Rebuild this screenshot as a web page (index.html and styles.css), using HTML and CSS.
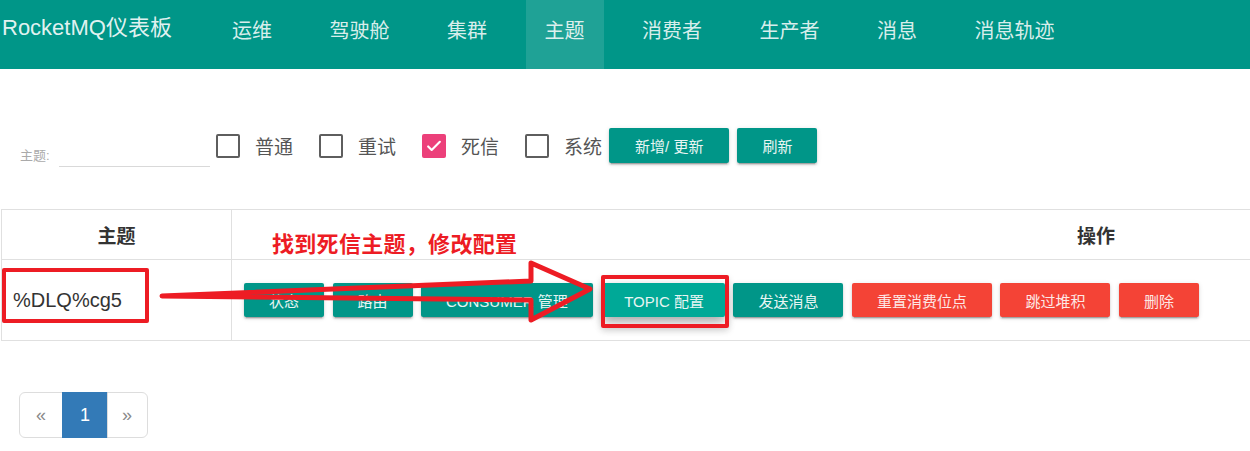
FILE: index.html
```html
<!DOCTYPE html>
<html lang="zh">
<head>
<meta charset="utf-8">
<title>RocketMQ仪表板</title>
<link rel="stylesheet" href="styles.css">
</head>
<body>
<div class="page">
  <nav class="navbar">
    <div class="brand">RocketMQ仪表板</div>
    <ul class="nav">
      <li><a>运维</a></li>
      <li><a>驾驶舱</a></li>
      <li><a>集群</a></li>
      <li class="active"><a>主题</a></li>
      <li><a>消费者</a></li>
      <li><a>生产者</a></li>
      <li><a>消息</a></li>
      <li><a>消息轨迹</a></li>
    </ul>
  </nav>

  <main class="content">
    <div class="filters">
      <label class="field">
        <span class="field-label">主题:</span>
        <span class="field-input"></span>
      </label>
      <label class="check"><span class="box"></span><span class="check-text">普通</span></label>
      <label class="check"><span class="box"></span><span class="check-text">重试</span></label>
      <label class="check"><span class="box checked"><svg viewBox="0 0 24 24" width="20" height="20"><path d="M5 12.5l4.2 4.2L19 7" fill="none" stroke="#fff" stroke-width="2.6" stroke-linecap="round" stroke-linejoin="round"/></svg></span><span class="check-text">死信</span></label>
      <label class="check last"><span class="box"></span><span class="check-text">系统</span></label>
      <button class="btn">新增/ 更新</button>
      <button class="btn">刷新</button>
    </div>

    <div class="table-wrap">
      <table class="topics">
        <thead>
          <tr><th class="col-topic">主题</th><th class="col-ops">操作</th></tr>
        </thead>
        <tbody>
          <tr>
            <td class="topic-name">%DLQ%cg5</td>
            <td>
              <div class="ops">
                <button class="btn">状态</button>
                <button class="btn">路由</button>
                <button class="btn">CONSUMER 管理</button>
                <button class="btn hover">TOPIC 配置</button>
                <button class="btn">发送消息</button>
                <button class="btn danger">重置消费位点</button>
                <button class="btn danger">跳过堆积</button>
                <button class="btn danger">删除</button>
              </div>
            </td>
          </tr>
        </tbody>
      </table>
    </div>

    <ul class="pager">
      <li class="disabled"><a>«</a></li>
      <li class="current"><a>1</a></li>
      <li class="disabled"><a>»</a></li>
    </ul>
  </main>

  <div class="note">找到死信主题，修改配置</div>
  <div class="mark mark-topic"></div>
  <div class="mark mark-button"></div>
  <svg class="arrow" width="1250" height="451" viewBox="0 0 1250 451">
    <polygon points="162,296 531,281 531,263 590,289 531,320 531,300" fill="none" stroke="#ed1c24" stroke-width="5" stroke-linejoin="round"/>
  </svg>
</div>
</body>
</html>
```

FILE: styles.css
```css
* { box-sizing: border-box; }

html, body {
  margin: 0;
  padding: 0;
  background: #fff;
  overflow: hidden;
}

body {
  font-family: "Liberation Sans", Arial, "Noto Sans CJK SC", sans-serif;
  color: #333;
}

.page {
  position: relative;
  width: 1250px;
  height: 451px;
  overflow: hidden;
}

/* ---------- navbar ---------- */
.navbar {
  display: flex;
  height: 69px;
  background: #009688;
  color: rgba(255, 255, 255, 0.86);
}

.brand {
  flex: 0 0 211px;
  margin-left: 2px;
  font-size: 22px;
  line-height: 56px;
  color: rgba(255, 255, 255, 0.9);
}

.nav {
  display: flex;
  gap: 19.5px;
  margin: 0;
  padding: 0;
  list-style: none;
}

.nav li a {
  display: block;
  height: 69px;
  padding: 0 19px;
  font-size: 20px;
  line-height: 62px;
  cursor: pointer;
}

.nav li.active a {
  background: rgba(255, 255, 255, 0.12);
}

/* ---------- filters ---------- */
.filters {
  display: flex;
  align-items: center;
  height: 35px;
  margin-top: 59px;
  padding-left: 20px;
}

.field {
  display: flex;
  align-items: flex-end;
  align-self: flex-end;
  margin-bottom: -4px;
  margin-right: 6px;
}

.field-label {
  width: 32px;
  font-size: 13px;
  color: #aaa;
  line-height: 15px;
  margin-bottom: 4px;
}

.field-input {
  display: block;
  width: 151px;
  height: 26px;
  margin-left: 7px;
  border-bottom: 1px solid #d9d9d9;
}

.check {
  display: flex;
  align-items: center;
  margin-right: 26px;
}

.check.last {
  margin-right: 7px;
}

.box {
  display: flex;
  align-items: center;
  justify-content: center;
  width: 24px;
  height: 24px;
  border: 2.5px solid #5e5e5e;
  border-radius: 2px;
}

.box.checked {
  background: #ec407a;
  border-color: #ec407a;
}

.check-text {
  margin-left: 15px;
  font-size: 19px;
  color: #555;
}

.btn {
  height: 35px;
  padding: 0 26px;
  border: none;
  border-radius: 2px;
  background: #009688;
  color: #e8f5f3;
  font-family: "Liberation Sans", Arial, "Noto Sans CJK SC", sans-serif;
  font-size: 15px;
  box-shadow: 0 2px 2px rgba(0, 0, 0, 0.14), 0 1px 5px rgba(0, 0, 0, 0.12), 0 3px 1px -2px rgba(0, 0, 0, 0.2);
}

.filters .btn + .btn {
  margin-left: 8px;
  padding: 0 25px;
}

.btn.hover {
  background: #00a997;
  box-shadow: 0 4px 8px rgba(0, 0, 0, 0.2), 0 6px 14px rgba(0, 0, 0, 0.18);
}

.btn.danger {
  background: #f44336;
  color: #fde8e6;
}

/* ---------- table ---------- */
.table-wrap {
  margin-top: 46px;
  margin-left: 1px;
  width: 1249px;
  overflow: hidden;
}

.topics {
  width: 1960px;
  border-collapse: collapse;
}

.topics th,
.topics td {
  border: 1px solid #e0e0e0;
}

.topics th {
  height: 50px;
  font-size: 19px;
  font-weight: bold;
  color: #333;
  text-align: center;
}

.col-topic {
  width: 230px;
}

.topics td {
  height: 81px;
}

.topic-name {
  padding-left: 11px;
  font-size: 20px;
  color: #333;
}

.ops {
  display: flex;
  gap: 8.5px;
  padding-left: 11px;
}

.ops .btn {
  height: 34px;
  padding: 0 25px;
}

.ops .btn.hover {
  padding: 0 21px;
  margin-left: 2px;
}

/* ---------- pager ---------- */
.pager {
  display: flex;
  margin: 51px 0 0 19px;
  padding: 0;
  list-style: none;
}

.pager li a {
  display: block;
  height: 46px;
  padding: 0 16px;
  font-size: 18px;
  line-height: 44px;
  border: 1px solid #ddd;
  margin-left: -1px;
  background: #fff;
}

.pager li:first-child a {
  margin-left: 0;
  border-radius: 6px 0 0 6px;
}

.pager li:last-child a {
  padding: 0 15px 0 14px;
  border-radius: 0 6px 6px 0;
}

.pager li.disabled a {
  color: #8a8a8a;
}

.pager li.current a {
  background: #337ab7;
  border-color: #337ab7;
  color: #fff;
  padding: 0 17px;
}

/* ---------- annotations (screenshot overlay) ---------- */
.note {
  position: absolute;
  left: 272px;
  top: 226px;
  font-size: 22px;
  font-weight: bold;
  color: #ed1c24;
  letter-spacing: 0.3px;
}

.mark {
  position: absolute;
  border: 4px solid #ed1c24;
  border-radius: 2px;
}

.mark-topic {
  left: 2px;
  top: 268px;
  width: 147px;
  height: 55px;
}

.mark-button {
  left: 601px;
  top: 275px;
  width: 128px;
  height: 53px;
  box-shadow: 0 3px 6px rgba(0, 0, 0, 0.15);
}

.arrow {
  position: absolute;
  left: 0;
  top: 0;
  pointer-events: none;
}
```
